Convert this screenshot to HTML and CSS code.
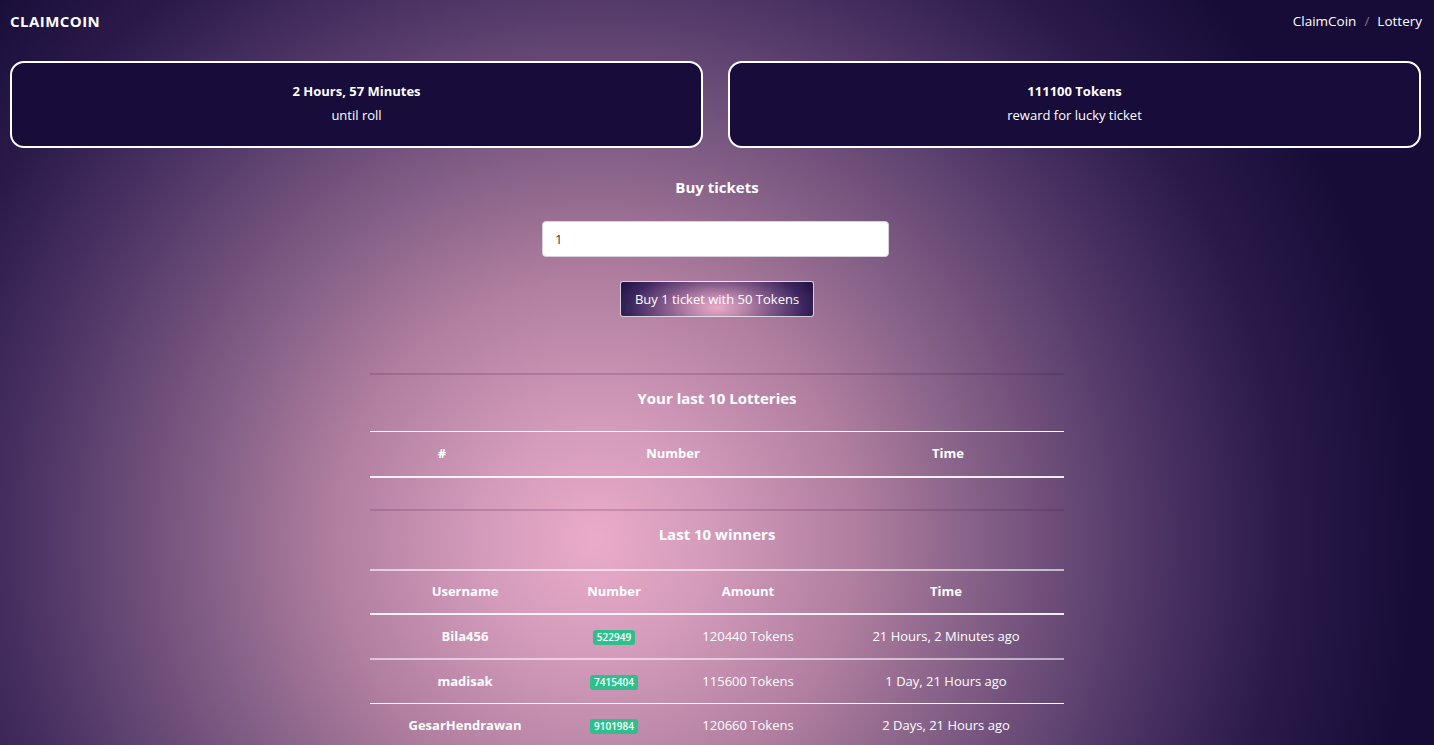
FILE: index.html
```html
<!DOCTYPE html>
<html lang="en">
<head>
<meta charset="utf-8">
<title>ClaimCoin - Lottery</title>
<link rel="stylesheet" href="styles.css">
</head>
<body>
<header class="topbar">
  <div class="brand">CLAIMCOIN</div>
  <nav class="crumbs"><span>ClaimCoin</span><span class="sep">/</span><span>Lottery</span></nav>
</header>

<section class="cards">
  <div class="card">
    <div class="card-title">2 Hours, 57 Minutes</div>
    <div class="card-sub">until roll</div>
  </div>
  <div class="card">
    <div class="card-title">111100 Tokens</div>
    <div class="card-sub">reward for lucky ticket</div>
  </div>
</section>

<section class="buy">
  <h2 class="buy-title">Buy tickets</h2>
  <input class="buy-input" type="text" value="1">
  <button class="buy-btn">Buy 1 ticket with 50 Tokens</button>
</section>

<table class="tbl tbl-mine">
  <thead>
    <tr class="title-row"><th colspan="3">Your last 10 Lotteries</th></tr>
    <tr class="head-row"><th class="c1">#</th><th class="c2">Number</th><th class="c3">Time</th></tr>
  </thead>
  <tbody></tbody>
</table>

<table class="tbl tbl-win">
  <thead>
    <tr class="title-row"><th colspan="4">Last 10 winners</th></tr>
    <tr class="head-row"><th class="w1">Username</th><th class="w2">Number</th><th class="w3">Amount</th><th class="w4">Time</th></tr>
  </thead>
  <tbody>
    <tr class="row-a"><td class="user">Bila456</td><td><span class="badge">522949</span></td><td>120440 Tokens</td><td>21 Hours, 2 Minutes ago</td></tr>
    <tr class="row-b"><td class="user">madisak</td><td><span class="badge">7415404</span></td><td>115600 Tokens</td><td>1 Day, 21 Hours ago</td></tr>
    <tr class="row-c"><td class="user">GesarHendrawan</td><td><span class="badge">9101984</span></td><td>120660 Tokens</td><td>2 Days, 21 Hours ago</td></tr>
  </tbody>
</table>
</body>
</html>
```

FILE: styles.css
```css
html, body {
  margin: 0;
  padding: 0;
}
body {
  min-height: 745px;
  font-family: "Open Sans", "Liberation Sans", sans-serif;
  color: #ffffff;
  background: radial-gradient(circle 820px at 595px 540px, #eaabc8 0%, #d49bbb 14%, #b07e9f 32%, #7c5a82 50%, #4e3566 68%, #2a1a4a 84%, #170c38 100%);
  background-color: #170c38;
  overflow: hidden;
}
.topbar {
  display: flex;
  justify-content: space-between;
  align-items: center;
  height: 42px;
  padding: 0 12px 0 10px;
}
.brand {
  font-weight: 700;
  font-size: 15px;
  letter-spacing: 0.45px;
}
.crumbs {
  font-size: 13.5px;
  display: flex;
  gap: 8px;
}
.crumbs .sep {
  color: rgba(255,255,255,0.45);
}
.cards {
  display: flex;
  gap: 25px;
  padding: 0 13px 0 10px;
  margin-top: 19px;
}
.card {
  flex: 1;
  background: #170c3a;
  border: 2px solid #ffffff;
  border-radius: 14px;
  padding: 16px 0 19px;
  text-align: center;
  font-size: 13px;
  line-height: 24px;
}
.card-title {
  font-weight: 700;
}
.buy {
  display: flex;
  flex-direction: column;
  align-items: center;
  margin-top: 28px;
}
.buy-title {
  margin: 0;
  font-size: 15px;
  font-weight: 700;
  line-height: 22px;
}
.buy-input {
  margin: 23px 0 0 -3px;
  width: 347px;
  height: 36px;
  box-sizing: border-box;
  border: 1px solid #d8d0dc;
  border-radius: 4px;
  background: #fff;
  padding: 0 12px;
  font-family: inherit;
  font-size: 13px;
  color: #333;
  outline: none;
}
.buy-btn {
  margin-top: 24px;
  height: 36px;
  box-sizing: border-box;
  padding: 0 14px;
  border: 1px solid rgba(255,255,255,0.8);
  border-radius: 3px;
  background: radial-gradient(ellipse 110px 50px at 50% 75%, #eaaac8 0%, #c08aae 22%, #7e5686 50%, #3e2760 78%, #1e1240 100%);
  color: #fff;
  font-family: inherit;
  font-size: 13px;
}
.tbl {
  width: 694px;
  margin: 0 auto;
  border-collapse: collapse;
  font-size: 13px;
  text-align: center;
}
.tbl-mine {
  margin-top: 56px;
}
.tbl-win {
  margin-top: 31px;
}
.title-row th {
  border-top: 2px solid rgba(60,20,70,0.18);
  font-size: 15px;
  font-weight: 700;
  line-height: 22px;
  padding: 12px 0 22px;
}
.tbl-mine .title-row th {
  border-bottom: 1px solid #fff;
}
.tbl-win .title-row th {
  padding-bottom: 24px;
  border-bottom: 2px solid rgba(255,255,255,0.6);
}
.head-row th {
  font-weight: 700;
  line-height: 21px;
  padding: 11px 0 12px;
  border-bottom: 2px solid rgba(255,255,255,0.9);
}
.tbl-win .head-row th {
  padding: 10px 0 11px;
}
.c1 { width: 144px; }
.c2 { width: 318px; }
.c3 { width: 232px; }
.w1 { width: 190px; }
.w2 { width: 108px; }
.w3 { width: 160px; }
.w4 { width: 236px; }
.tbl td {
  line-height: 21px;
  padding: 11px 0;
}
.row-a td { border-bottom: 2px solid rgba(255,255,255,0.55); }
.row-b td { border-bottom: 1px solid #fff; }
.user { font-weight: 700; }
.badge {
  display: inline-block;
  background: #2ebf8d;
  color: #fff;
  font-size: 10px;
  font-weight: 600;
  line-height: 13px;
  padding: 1px 4px;
  border-radius: 3px;
  vertical-align: middle;
}
```
